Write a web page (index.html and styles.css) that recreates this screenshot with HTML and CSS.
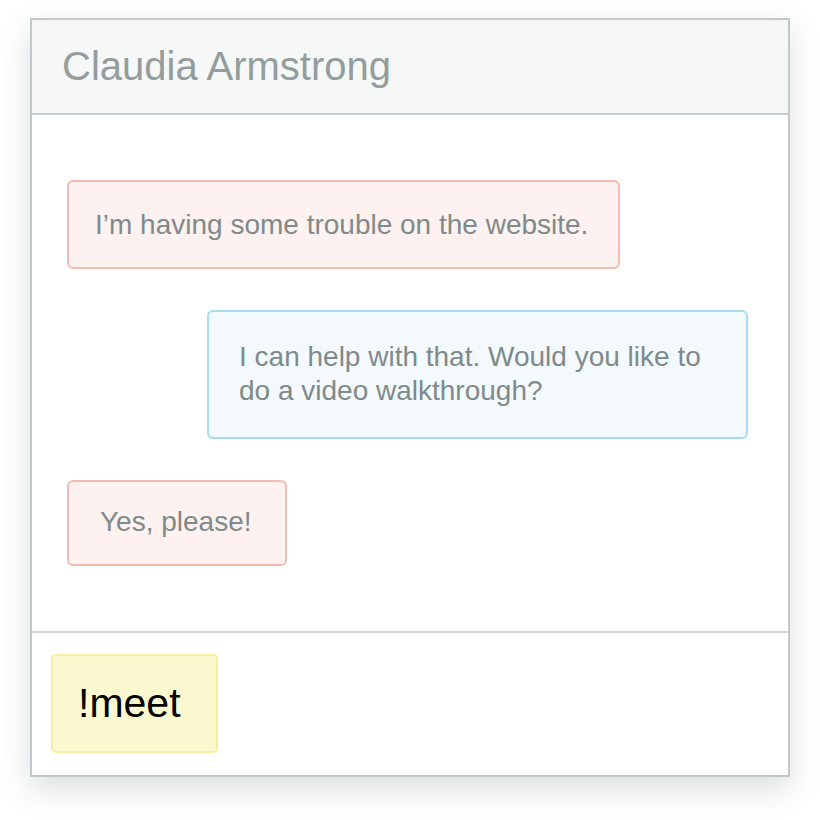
FILE: index.html
```html
<!DOCTYPE html>
<html>
<head>
<meta charset="utf-8">
<link rel="stylesheet" href="styles.css">
</head>
<body>
<div class="card">
  <div class="header">Claudia Armstrong</div>
  <div class="messages">
    <div class="bubble them b1">I’m having some trouble on the website.</div>
    <div class="bubble me b2">I can help with that. Would you like to do a video walkthrough?</div>
    <div class="bubble them b3">Yes, please!</div>
  </div>
  <div class="footer">
    <div class="command">!meet</div>
  </div>
</div>
</body>
</html>
```
FILE: styles.css
```css
html, body {
  margin: 0;
  padding: 0;
  background: #ffffff;
}
body {
  font-family: "Liberation Sans", Arial, sans-serif;
  padding: 18px 30px 0 30px;
  min-height: 820px;
  box-sizing: border-box;
}
.card {
  width: 756px;
  height: 755px;
  border: 2px solid #c2c8c9;
  display: flex;
  flex-direction: column;
  background: #ffffff;
  box-shadow: 0 12px 30px rgba(60, 72, 78, 0.18);
}
.header {
  height: 93px;
  flex-shrink: 0;
  background: #f6f8f7;
  border-bottom: 2px solid #c7cdce;
  color: #949d9d;
  font-size: 40px;
  display: flex;
  align-items: center;
  padding-left: 30px;
}
.messages {
  height: 518px;
  flex-shrink: 0;
  border-bottom: 2px solid #d0d5d6;
  display: flex;
  flex-direction: column;
  align-items: flex-start;
  padding: 65px 40px 0 35px;
  box-sizing: border-box;
  gap: 41px;
}
.bubble {
  border: 2px solid;
  border-radius: 6px;
  font-size: 28px;
  line-height: 34px;
  color: #7f8a8b;
}
.them {
  background: #fdf2ef;
  border-color: #f1bcad;
}
.me {
  background: #f3f9fc;
  border-color: #a6dcee;
  align-self: flex-end;
}
.b1 {
  padding: 26px 30px 25px 26px;
}
.b2 {
  width: 477px;
  padding: 28px 30px 29px 30px;
}
.b3 {
  padding: 23px 33px 25px 31px;
}
.footer {
  flex: 1;
  padding: 21px 0 0 19px;
}
.command {
  width: 138px;
  height: 95px;
  background: #fcf8cf;
  border: 2px solid #f8eea0;
  border-radius: 5px;
  color: #000000;
  font-size: 41px;
  display: flex;
  align-items: center;
  padding-left: 25px;
}
```
